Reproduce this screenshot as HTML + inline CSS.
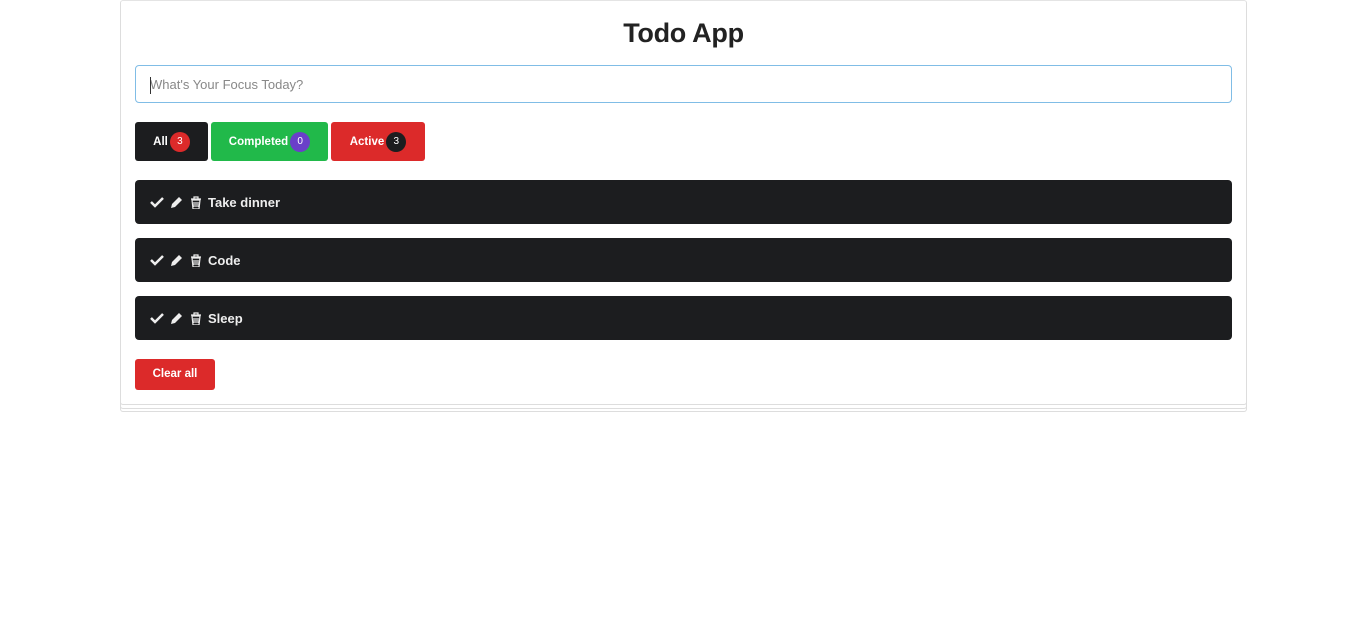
<!DOCTYPE html><html><head><style>
body{margin:0;background:#fff;font-family:"Liberation Sans",sans-serif;}
.card{position:absolute;left:120px;top:0;width:1125px;height:403px;border:1px solid #ddd;border-top:1px solid #e4e4e4;border-radius:3px;background:#fff;box-shadow:0 4px 0 -1px #fff,0 4px 0 0 #ddd,0 7px 0 -1px #fff,0 7px 0 0 #ddd;}
h1{margin:0;position:absolute;top:17px;width:100%;text-align:center;font-size:27px;font-weight:bold;color:#222;letter-spacing:-0.3px}
.inp{position:absolute;left:14px;top:64px;height:38px;border:1px solid #80bde6;border-radius:4px;font-size:13px;color:#888;line-height:38px;padding-left:14px;box-sizing:border-box;width:1097px;}
.inp:before{content:"";position:absolute;left:14px;top:11px;width:1px;height:17px;background:#333}
.btn{position:absolute;top:121px;height:39px;border-radius:3px;color:#fff;font-size:11.5px;font-weight:bold;display:flex;align-items:center;justify-content:center;gap:2px}
.b{display:inline-block;width:20px;height:20px;border-radius:50%;font-size:10px;line-height:20px;text-align:center;font-weight:normal}
.row{position:absolute;left:14px;width:1097px;height:44px;background:#1c1d1f;border-radius:4px;color:#eee;font-size:13px;font-weight:bold;display:flex;align-items:center;padding-left:15px;box-sizing:border-box;gap:6px}
.clr{position:absolute;left:14px;top:358px;width:80px;height:31px;background:#dc2a2a;border-radius:3px;color:#fff;font-size:11.5px;font-weight:bold;text-align:center;line-height:31px}
</style></head><body>
<div class="card">
<h1>Todo App</h1>
<div class="inp">What's Your Focus Today?</div>
<div class="btn" style="left:14px;width:73px;background:#1c1d1f">All <span class="b" style="background:#dc2a2a">3</span></div>
<div class="btn" style="left:90px;width:117px;background:#21b94a">Completed <span class="b" style="background:#6a3fc9">0</span></div>
<div class="btn" style="left:210px;width:94px;background:#dc2a2a">Active <span class="b" style="background:#1c1d1f">3</span></div>
<div class="row" style="top:179px"><svg width="52" height="14" viewBox="0 0 52 14"><path d="M1 7l4 4 8-8" stroke="#eee" stroke-width="2.5" fill="none"/><path d="M21 13l1-4 7-7 3 3-7 7z" fill="#eee"/><path d="M41 4h10M44 4V2h4v2M42 5h8l-1 9h-6z M44 7v5M46 7v5M48 7v5" stroke="#eee" stroke-width="1.2" fill="none"/></svg>Take dinner</div>
<div class="row" style="top:237px"><svg width="52" height="14" viewBox="0 0 52 14"><path d="M1 7l4 4 8-8" stroke="#eee" stroke-width="2.5" fill="none"/><path d="M21 13l1-4 7-7 3 3-7 7z" fill="#eee"/><path d="M41 4h10M44 4V2h4v2M42 5h8l-1 9h-6z M44 7v5M46 7v5M48 7v5" stroke="#eee" stroke-width="1.2" fill="none"/></svg>Code</div>
<div class="row" style="top:295px"><svg width="52" height="14" viewBox="0 0 52 14"><path d="M1 7l4 4 8-8" stroke="#eee" stroke-width="2.5" fill="none"/><path d="M21 13l1-4 7-7 3 3-7 7z" fill="#eee"/><path d="M41 4h10M44 4V2h4v2M42 5h8l-1 9h-6z M44 7v5M46 7v5M48 7v5" stroke="#eee" stroke-width="1.2" fill="none"/></svg>Sleep</div>
<div class="clr">Clear all</div>
</div>
</body></html>
